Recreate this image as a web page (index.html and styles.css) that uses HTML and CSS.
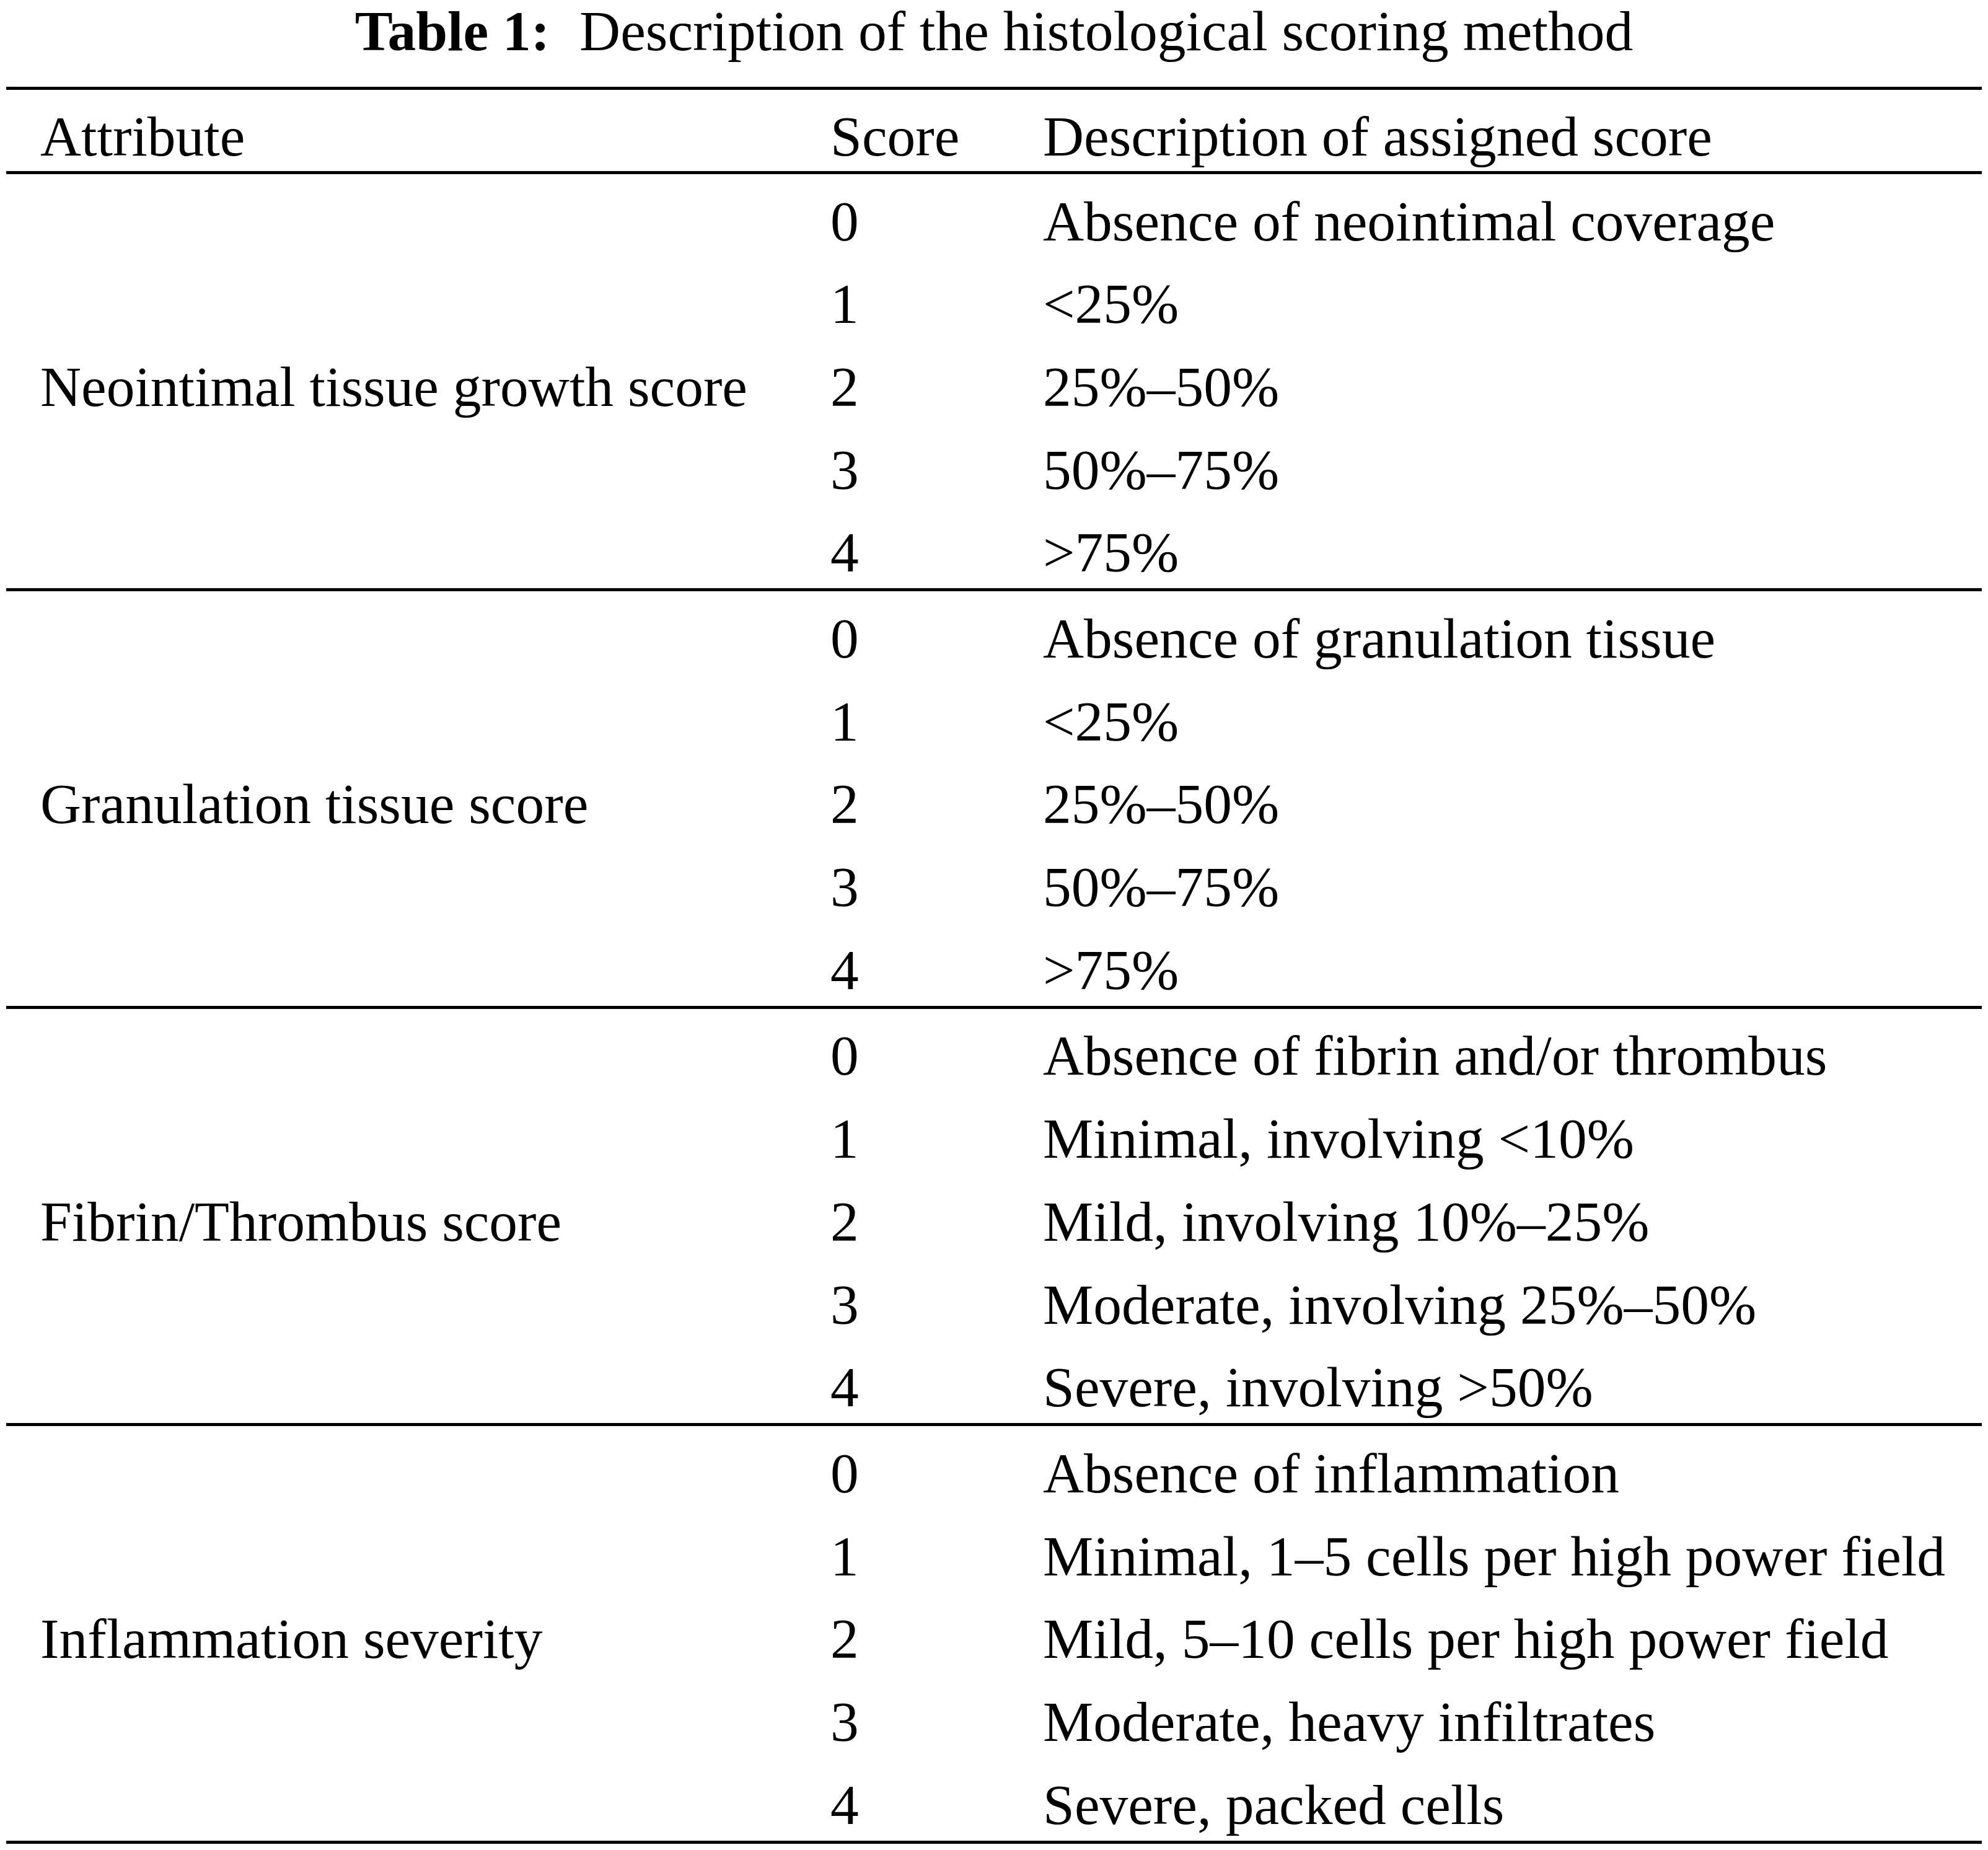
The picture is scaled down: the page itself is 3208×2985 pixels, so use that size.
FILE: index.html
```html
<!DOCTYPE html>
<html lang="en">
<head>
<meta charset="utf-8">
<title>Table 1: Description of the histological scoring method</title>
<link rel="stylesheet" href="styles.css">
</head>
<body>
<div class="wrap">
  <h1 class="caption"><span class="label">Table 1:</span> Description of the histological scoring method</h1>
  <table class="scoring">
    <colgroup>
      <col class="c-attr">
      <col class="c-score">
      <col class="c-desc">
    </colgroup>
    <thead>
      <tr><th>Attribute</th><th>Score</th><th>Description of assigned score</th></tr>
    </thead>
    <tbody>
      <tr><td class="attr" rowspan="5">Neointimal tissue growth score</td><td>0</td><td>Absence of neointimal coverage</td></tr>
      <tr><td>1</td><td>&lt;25%</td></tr>
      <tr><td>2</td><td>25%–50%</td></tr>
      <tr><td>3</td><td>50%–75%</td></tr>
      <tr><td>4</td><td>&gt;75%</td></tr>
    </tbody>
    <tbody>
      <tr><td class="attr" rowspan="5">Granulation tissue score</td><td>0</td><td>Absence of granulation tissue</td></tr>
      <tr><td>1</td><td>&lt;25%</td></tr>
      <tr><td>2</td><td>25%–50%</td></tr>
      <tr><td>3</td><td>50%–75%</td></tr>
      <tr><td>4</td><td>&gt;75%</td></tr>
    </tbody>
    <tbody>
      <tr><td class="attr" rowspan="5">Fibrin/Thrombus score</td><td>0</td><td>Absence of fibrin and/or thrombus</td></tr>
      <tr><td>1</td><td>Minimal, involving &lt;10%</td></tr>
      <tr><td>2</td><td>Mild, involving 10%–25%</td></tr>
      <tr><td>3</td><td>Moderate, involving 25%–50%</td></tr>
      <tr><td>4</td><td>Severe, involving &gt;50%</td></tr>
    </tbody>
    <tbody>
      <tr><td class="attr" rowspan="5">Inflammation severity</td><td>0</td><td>Absence of inflammation</td></tr>
      <tr><td>1</td><td>Minimal, 1–5 cells per high power field</td></tr>
      <tr><td>2</td><td>Mild, 5–10 cells per high power field</td></tr>
      <tr><td>3</td><td>Moderate, heavy infiltrates</td></tr>
      <tr><td>4</td><td>Severe, packed cells</td></tr>
    </tbody>
  </table>
</div>
</body>
</html>
```

FILE: styles.css
```css
html, body {
  margin: 0;
  padding: 0;
  background: #ffffff;
}

body {
  color: #000000;
  font-family: "Liberation Serif", "Times New Roman", serif;
}

.wrap {
  padding: 0 10px;
}

.caption {
  margin: 0 0 38.7px 0;
  font-size: 91.5px;
  font-weight: normal;
  line-height: 101.3px;
  text-align: center;
  white-space: nowrap;
}

.caption .label {
  font-weight: bold;
  margin-right: 25px;
}

.scoring {
  width: 100%;
  border-collapse: collapse;
  font-size: 91.5px;
  table-layout: fixed;
}

.c-attr { width: 1330px; }
.c-score { width: 343px; }
.c-desc { width: auto; }

.scoring thead {
  border-top: 5px solid #000;
  border-bottom: 5px solid #000;
}

.scoring tbody {
  border-bottom: 5px solid #000;
}

.scoring th,
.scoring td {
  padding: 18.6px 0 0 0;
  line-height: 115.1px;
  text-align: left;
  vertical-align: top;
  font-weight: normal;
  white-space: nowrap;
}

.scoring th {
  padding-top: 21.3px;
  line-height: 109.7px;
}

.scoring th:first-child,
.scoring td.attr {
  padding-left: 55px;
}

.scoring td.attr {
  vertical-align: middle;
}
```
